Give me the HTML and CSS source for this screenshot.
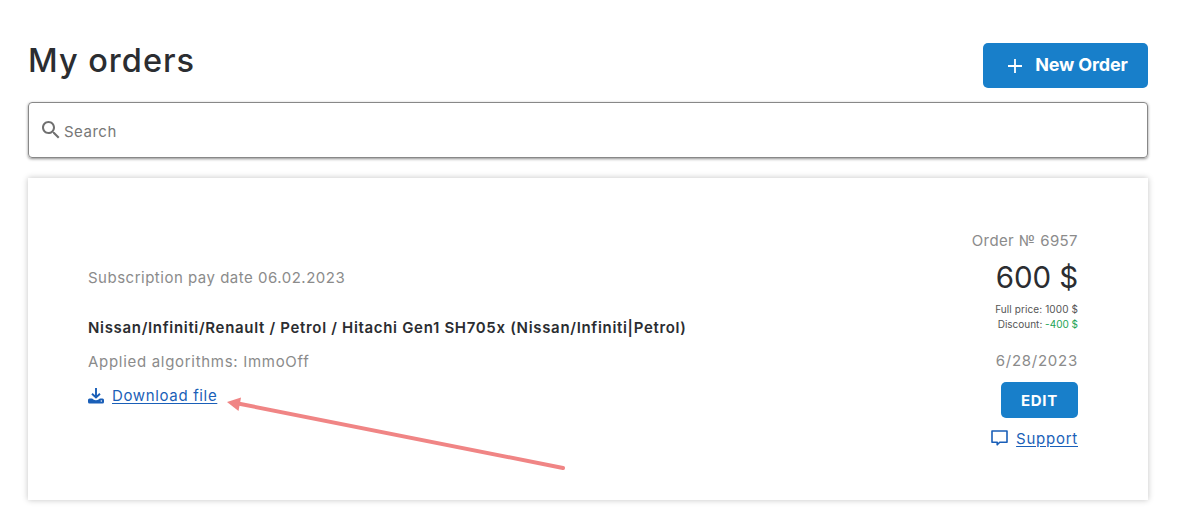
FILE: index.html
```html
<!DOCTYPE html>
<html lang="en">
<head>
<meta charset="utf-8">
<title>My orders</title>
<link rel="stylesheet" href="styles.css">
</head>
<body>
<main class="page">
  <header class="head">
    <h1 class="title">My orders</h1>
    <button class="btn new-order"><svg width="16" height="16" viewBox="0 0 16 16"><path d="M8 1v14M1 8h14" stroke="#fff" stroke-width="1.8" fill="none"/></svg><span class="new-label">New Order</span></button>
  </header>
  <div class="search">
    <svg width="24" height="24" viewBox="0 0 24 24" fill="#707070"><path d="M15.5 14h-.79l-.28-.27C15.41 12.59 16 11.11 16 9.5 16 5.91 13.09 3 9.5 3S3 5.91 3 9.5 5.91 16 9.5 16c1.61 0 3.09-.59 4.23-1.57l.27.28v.79l5 4.99L20.49 19l-4.99-5zm-6 0C7.01 14 5 11.99 5 9.5S7.01 5 9.5 5 14 7.01 14 9.5 11.99 14 9.5 14z"/></svg>
    <span class="placeholder">Search</span>
  </div>
  <section class="card">
    <div class="info">
      <div class="muted sub">Subscription pay date 06.02.2023</div>
      <div class="name">Nissan/Infiniti/Renault / Petrol / Hitachi Gen1 SH705x (Nissan/Infiniti|Petrol)</div>
      <div class="muted algo">Applied algorithms: ImmoOff</div>
      <div class="link-row download">
        <svg width="16" height="16" viewBox="0 0 16 16"><path d="M8 0v9M4 5.700 8 9.500l4-3.800" fill="none" stroke="#1a5fb8" stroke-width="1.900"/><path d="M1.500 10.500h2.300c1 0 2 1.800 4.200 1.800s3.200-1.800 4.200-1.800h2.300A1.500 1.500 0 0 1 16 12v2a1.500 1.500 0 0 1-1.500 1.500h-13A1.500 1.500 0 0 1 0 14v-2a1.500 1.500 0 0 1 1.500-1.500z" fill="#1a5fb8"/><circle cx="13.300" cy="13" r=".7" fill="#fff"/></svg>
        <a class="link">Download file</a>
      </div>
    </div>
    <div class="summary">
      <div class="muted order">Order № 6957</div>
      <div class="price">600 $</div>
      <div class="small full">Full price: 1000 $</div>
      <div class="small disc">Discount: <b>-400 $</b></div>
      <div class="muted date">6/28/2023</div>
      <button class="btn edit">EDIT</button>
      <div class="link-row support">
        <svg width="17" height="17" viewBox="0 0 17 17"><path d="M1 1h15v11.300H8.700L6.200 14.800v-2.500H1z" fill="none" stroke="#1a5fb8" stroke-width="1.600" stroke-linejoin="round"/></svg>
        <a class="link">Support</a>
      </div>
    </div>
    <svg class="arrow" width="350" height="80" viewBox="220 395 350 80"><path d="M238 403.500 563 468" stroke="#f08585" stroke-width="4" stroke-linecap="round"/><path d="M227 402 241 397.500 238.500 411z" fill="#f08585"/></svg>
  </section>
</main>
</body>
</html>
```
FILE: styles.css
```css
* { box-sizing: border-box; }
body { margin: 0; background: #fff; font-family: Inter, "Liberation Sans", sans-serif; color: #2b2d31; }
.page { height: 514px; padding: 43px 31px 0 28px; }
.head { display: flex; justify-content: space-between; height: 45px; }
.title { margin: 0; font-size: 32.5px; line-height: 36px; font-weight: 500; letter-spacing: 1px; }
.btn { display: flex; align-items: center; justify-content: center; border: 0; border-radius: 5px; background: #187fca; color: #fff; font-family: inherit; padding: 0; white-space: nowrap; }
.new-order { width: 165px; height: 45px; gap: 12px; font-size: 18px; font-weight: 700; letter-spacing: -.15px; padding-left: 4px; }
.new-label { padding-bottom: 2px; }
.search { display: flex; align-items: center; height: 56px; margin-top: 14px; padding: 0 0 0 10px; border: 1px solid #888; border-radius: 4px; box-shadow: 0 1px 3px rgba(0,0,0,.45); }
.placeholder { font-size: 15px; line-height: 20px; letter-spacing: .5px; color: #777; margin: 3px 0 0 1px; }
.card { position: relative; display: flex; justify-content: space-between; height: 322px; margin-top: 20px; padding: 53px 70px 0 60px; box-shadow: 0 0 6px rgba(0,0,0,.24); }
.muted { font-size: 15px; line-height: 20px; color: #8b8b8b; letter-spacing: .5px; }
.info { padding-top: 37px; white-space: nowrap; }
.name { margin-top: 30px; font-size: 15px; line-height: 20px; font-weight: 600; letter-spacing: .68px; }
.algo { margin-top: 14px; letter-spacing: .7px; }
.link-row { display: flex; align-items: center; gap: 8px; }
.link { font-size: 15px; line-height: 20px; color: #1a5fb8; text-decoration: underline; text-underline-offset: 2px; letter-spacing: .65px; }
.download { margin-top: 14px; }
.download svg { margin-top: -1px; }
.summary { display: flex; flex-direction: column; align-items: flex-end; white-space: nowrap; }
.order { letter-spacing: .4px; }
.price { margin-top: 8px; font-size: 29.5px; line-height: 36px; letter-spacing: -.1px; }
.small { font-size: 10px; line-height: 15px; color: #555; letter-spacing: .1px; }
.full { margin-top: 7px; }
.disc { letter-spacing: 0; }
.small b { font-weight: 400; color: #22a455; }
.date { margin-top: 19px; letter-spacing: .75px; }
.edit { width: 77px; height: 36px; margin-top: 11px; font-size: 15px; font-weight: 700; letter-spacing: .7px; }
.support { margin-top: 11px; }
.support .link { letter-spacing: .75px; }
.support svg { margin-top: -1px; }
.arrow { position: absolute; left: 192px; top: 217px; }
```
